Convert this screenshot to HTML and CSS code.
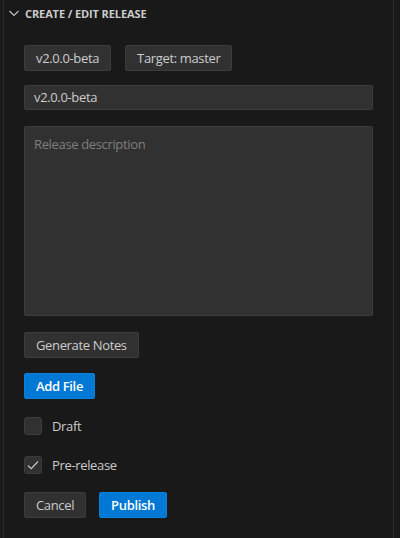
FILE: index.html
```html
<!DOCTYPE html>
<html>
<head>
<meta charset="utf-8">
<link rel="stylesheet" href="styles.css">
</head>
<body>
<div class="panel">
  <div class="header">
    <svg class="chev" width="16" height="16" viewBox="0 0 16 16"><path d="M3.5 6 L8 10.5 L12.5 6" fill="none" stroke="#c5c5c5" stroke-width="1.1"/></svg>
    <span class="title">CREATE / EDIT RELEASE</span>
  </div>
  <div class="content">
    <div class="row tags">
      <span class="btn sec">v2.0.0-beta</span>
      <span class="btn sec">Target: master</span>
    </div>
    <div class="input">v2.0.0-beta</div>
    <div class="textarea"><span class="ph">Release description</span></div>
    <div class="row gen"><span class="btn sec">Generate Notes</span></div>
    <div class="row add"><span class="btn pri">Add File</span></div>
    <label class="check draft"><span class="box"></span><span>Draft</span></label>
    <label class="check pre"><span class="box"><svg width="16" height="16" viewBox="0 0 16 16"><path d="M3 8.5 L6.2 11.7 L13 4.5" fill="none" stroke="#c8c8c8" stroke-width="1.1"/></svg></span><span>Pre-release</span></label>
    <div class="row actions">
      <span class="btn sec">Cancel</span>
      <span class="btn pri">Publish</span>
    </div>
  </div>
  <div class="scroll"></div>
</div>
</body>
</html>
```
FILE: styles.css
```css
html, body {
  margin: 0;
  padding: 0;
  background: #191919;
}
body {
  width: 400px;
  height: 538px;
  overflow: hidden;
  font-family: "Open Sans", "Noto Sans", sans-serif;
  font-size: 13px;
  letter-spacing: -0.35px;
  color: #cccccc;
}
.panel {
  position: relative;
  height: 538px;
  border-left: 1px solid #2a2a2a;
  margin-left: 3px;
}
.scroll {
  position: absolute;
  top: 0;
  right: 0;
  width: 6px;
  height: 100%;
  border-left: 1px solid #2b2b2b;
  background: #191919;
}
.header {
  display: flex;
  align-items: center;
  height: 26px;
  padding-left: 2px;
}
.chev {
  margin-right: 3px;
}
.title {
  font-size: 11px;
  font-weight: 700;
  color: #cccccc;
  letter-spacing: -0.1px;
}
.content {
  padding: 19px 24px 0 20px;
  display: flex;
  flex-direction: column;
  align-items: flex-start;
}
.row {
  display: flex;
  gap: 13px;
}
.tags {
  gap: 14px;
}
.btn {
  display: inline-block;
  box-sizing: border-box;
  height: 26px;
  line-height: 24px;
  padding: 0 11px;
  border-radius: 2px;
  font-size: 13px;
  white-space: nowrap;
}
.sec {
  background: #313131;
  border: 1px solid #3c3c3c;
  color: #cccccc;
}
.pri {
  background: #0078d4;
  border: 1px solid #0a82dc;
  color: #ffffff;
  font-weight: 600;
}
.input {
  box-sizing: border-box;
  margin-top: 14px;
  width: 349px;
  height: 25px;
  line-height: 23px;
  padding: 0 9px;
  background: #313131;
  border: 1px solid #3c3c3c;
  border-radius: 2px;
  color: #cccccc;
}
.textarea {
  box-sizing: border-box;
  margin-top: 16px;
  width: 349px;
  height: 190px;
  padding: 8px 9px;
  background: #313131;
  border: 1px solid #3c3c3c;
  border-radius: 2px;
}
.ph {
  color: #7f7f7f;
}
.gen {
  margin-top: 16px;
}
.add {
  margin-top: 15px;
}
.check {
  display: flex;
  align-items: center;
  gap: 10px;
  height: 18px;
}
.draft {
  margin-top: 18px;
}
.pre {
  margin-top: 21px;
}
.box {
  box-sizing: border-box;
  width: 18px;
  height: 18px;
  background: #313131;
  border: 1px solid #3c3c3c;
  border-radius: 3px;
  display: flex;
  align-items: center;
  justify-content: center;
}
.actions {
  margin-top: 18px;
}
```
